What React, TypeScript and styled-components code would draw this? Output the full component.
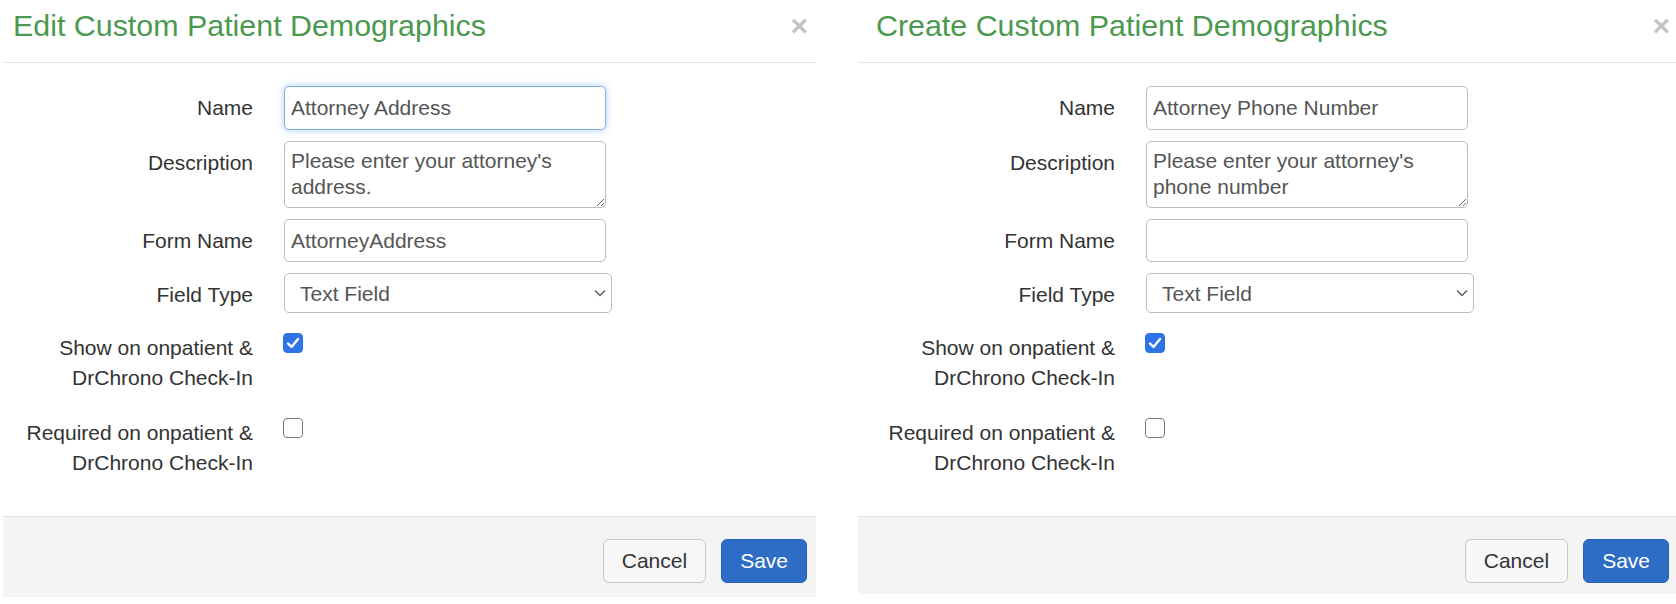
import styled, { createGlobalStyle, css } from 'styled-components'

const GlobalStyle = createGlobalStyle`
    html, body {
        margin: 0;
        padding: 0;
        background: #ffffff;
    }

    body {
        font-family: "Liberation Sans", Arial, Helvetica, sans-serif;
        color: #333333;
    }

    * {
        box-sizing: border-box;
    }
`

const Page = styled.div`
    display: flex;
    align-items: flex-start;
    gap: 42px;
    width: 1676px;
    height: 604px;
    padding-left: 3px;
    overflow: hidden;
`

const Panel = styled.div<{ $width: number }>`
    flex: none;
    display: flex;
    flex-direction: column;
    width: ${(p) => p.$width}px;
    background: #ffffff;
`

const Header = styled.div<{ $inset: number }>`
    display: flex;
    justify-content: space-between;
    align-items: flex-start;
    padding: 9px 8px 20px ${(p) => p.$inset}px;
    border-bottom: 1px solid #e5e5e5;
`

const Title = styled.h4`
    margin: 0;
    font-size: 30.4px;
    line-height: 33px;
    font-weight: normal;
    color: #4b994f;
`

const Close = styled.button`
    border: 0;
    padding: 0;
    margin-top: 2px;
    background: transparent;
    font-family: "Liberation Sans", Arial, sans-serif;
    font-size: 30px;
    font-weight: bold;
    line-height: 30px;
    color: #c4c4c4;
    cursor: pointer;
`

const Body = styled.div`
    display: flex;
    flex-direction: column;
    height: 453px;
    padding-top: 23px;
`

const Fields = styled.div`
    display: flex;
    flex-direction: column;
    gap: 11px;
`

const Checks = styled.div`
    display: flex;
    flex-direction: column;
    gap: 25px;
    margin-top: 20px;
`

const Row = styled.div<{ $labelWidth: number }>`
    display: grid;
    grid-template-columns: ${(p) => p.$labelWidth}px 1fr;
    column-gap: 31px;
    align-items: start;
`

const Label = styled.label<{ $check?: boolean }>`
    text-align: right;
    font-size: 21px;
    line-height: 30px;
    color: #333333;
    padding-top: ${(p) => (p.$check ? 0 : 7)}px;
`

const controlBase = css`
    display: block;
    font-family: "Liberation Sans", Arial, Helvetica, sans-serif;
    font-size: 21px;
    color: #555555;
    background: #ffffff;
    border: 1px solid #bdbdbd;
    border-radius: 5px;
    outline: none;
`

const Input = styled.input<{ $focused?: boolean; $height?: number }>`
    ${controlBase};
    width: 322px;
    height: ${(p) => p.$height ?? 44}px;
    padding: 0 6px;

    ${(p) =>
        p.$focused &&
        css`
            border-color: #7fb0ea;
            box-shadow: 0 0 7px rgba(102, 160, 233, 0.55);
        `}
`

const TextArea = styled.textarea`
    ${controlBase};
    width: 322px;
    height: 67px;
    padding: 6px 6px;
    line-height: 26px;
    resize: vertical;
`

const SelectWrap = styled.div`
    position: relative;
    width: 328px;
`

const Select = styled.select`
    ${controlBase};
    width: 328px;
    height: 40px;
    padding: 0 30px 0 15px;
    appearance: none;
    -webkit-appearance: none;
`

const Chevron = styled.svg`
    position: absolute;
    right: 6px;
    top: 16px;
    width: 12px;
    height: 8px;
    pointer-events: none;
`

const CheckBox = styled.span<{ $checked?: boolean }>`
    display: inline-flex;
    align-items: center;
    justify-content: center;
    width: 20px;
    height: 20px;
    margin-left: -1px;
    border-radius: 4px;
    border: 1px solid ${(p) => (p.$checked ? '#2f74e6' : '#767676')};
    background: ${(p) => (p.$checked ? '#2f74e6' : '#ffffff')};
`

const Footer = styled.div<{ $height: number }>`
    display: flex;
    justify-content: flex-end;
    gap: 15px;
    padding: 22px 9px 0;
    height: ${(p) => p.$height}px;
    background: #f4f4f4;
    border-top: 1px solid #e2e2e2;
`

const Button = styled.button<{ $primary?: boolean }>`
    height: 44px;
    padding: 0 18px;
    font-family: "Liberation Sans", Arial, Helvetica, sans-serif;
    font-size: 21px;
    border-radius: 6px;
    cursor: pointer;
    color: ${(p) => (p.$primary ? '#ffffff' : '#333333')};
    background: ${(p) => (p.$primary ? '#2e6dc6' : '#f7f7f7')};
    border: 1px solid ${(p) => (p.$primary ? '#2a62b3' : '#c8c8c8')};
`

type DemoProps = {
    title: string
    name: string
    description: string
    formName: string
    focused?: boolean
    width: number
    footerHeight: number
    inset: number
    labelWidth: number
}

const Demographics = ({ title, name, description, formName, focused, width, footerHeight, inset, labelWidth }: DemoProps) => {
    return <Panel $width={width}>
        <Header $inset={inset}>
            <Title>{title}</Title>
            <Close aria-label="Close">×</Close>
        </Header>

        <Body>
            <Fields>
                <Row $labelWidth={labelWidth}>
                    <Label>Name</Label>
                    <Input $focused={focused} defaultValue={name} />
                </Row>

                <Row $labelWidth={labelWidth}>
                    <Label>Description</Label>
                    <TextArea defaultValue={description} />
                </Row>

                <Row $labelWidth={labelWidth}>
                    <Label>Form Name</Label>
                    <Input $height={43} defaultValue={formName} />
                </Row>

                <Row $labelWidth={labelWidth}>
                    <Label>Field Type</Label>
                    <SelectWrap>
                        <Select defaultValue="text">
                            <option value="text">Text Field</option>
                        </Select>
                        <Chevron viewBox="0 0 12 8">
                            <path d="M1 1.5 L6 6.5 L11 1.5" fill="none" stroke="#555" strokeWidth="1.3" />
                        </Chevron>
                    </SelectWrap>
                </Row>
            </Fields>

            <Checks>
                <Row $labelWidth={labelWidth}>
                    <Label $check>Show on onpatient &amp;<br />DrChrono Check-In</Label>
                    <div>
                        <CheckBox $checked>
                            <svg width="14" height="12" viewBox="0 0 14 12">
                                <path d="M2 6.5 L5.5 10 L12 2" fill="none" stroke="#fff" strokeWidth="2.4" strokeLinecap="round" strokeLinejoin="round" />
                            </svg>
                        </CheckBox>
                    </div>
                </Row>

                <Row $labelWidth={labelWidth}>
                    <Label $check>Required on onpatient &amp;<br />DrChrono Check-In</Label>
                    <div>
                        <CheckBox />
                    </div>
                </Row>
            </Checks>
        </Body>

        <Footer $height={footerHeight}>
            <Button>Cancel</Button>
            <Button $primary>Save</Button>
        </Footer>
    </Panel>
}

const App = () => {
    return <>
        <GlobalStyle />
        <Page>
            <Demographics
                title="Edit Custom Patient Demographics"
                name="Attorney Address"
                description={"Please enter your attorney's address."}
                formName="AttorneyAddress"
                focused
                width={813}
                footerHeight={81}
                inset={10}
                labelWidth={250}
            />

            <Demographics
                title="Create Custom Patient Demographics"
                name="Attorney Phone Number"
                description={"Please enter your attorney's phone number"}
                formName=""
                width={820}
                footerHeight={78}
                inset={18}
                labelWidth={257}
            />
        </Page>
    </>
}

export default App
